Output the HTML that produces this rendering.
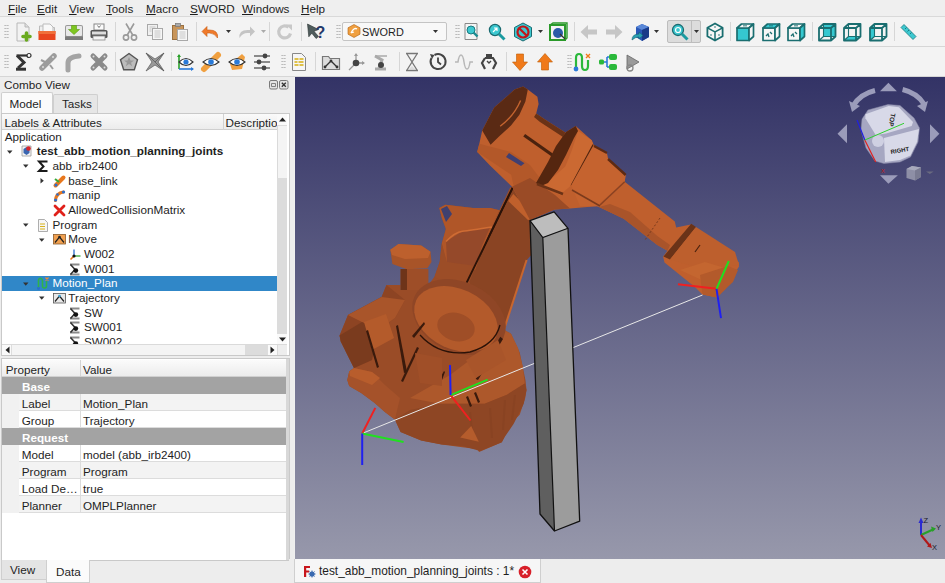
<!DOCTYPE html>
<html><head><meta charset="utf-8">
<style>
*{margin:0;padding:0;box-sizing:border-box}
html,body{width:945px;height:583px;overflow:hidden;background:#efefef;font-family:"Liberation Sans",sans-serif;font-size:12px;color:#1e1e1e}
.a{position:absolute}
svg{overflow:visible}
.t{position:absolute;white-space:nowrap;line-height:1}
#menubar{left:0;top:0;width:945px;height:17px;background:#efefef;border-bottom:1px solid #d9d9d9}
.mi{position:absolute;top:1.6px;font-size:11.7px;line-height:13px}
.mi u{text-decoration:underline;text-underline-offset:0.5px;text-decoration-thickness:1px}
#tb1{left:0;top:17px;width:945px;height:30px;background:#f3f3f3;border-bottom:1px solid #d6d6d6}
#tb2{left:0;top:47px;width:945px;height:30px;background:#f3f3f3;border-bottom:1px solid #d6d6d6}
.sep{position:absolute;width:1px;height:19px;background:#d6d6d6}
.grip{position:absolute;width:5px;height:16px;background-image:radial-gradient(circle,#b4b4b4 0.7px,transparent 1px);background-size:2.5px 3px}
#left{left:0;top:77px;width:294px;height:506px;background:#ededed}
#view{left:295px;top:77px;width:650px;height:482px;background:linear-gradient(#333366,#9798ab);overflow:hidden}
#bottombar{left:289px;top:559px;width:656px;height:24px;background:#ededed}
</style></head><body>
<div id="menubar" class="a">
<span class="mi" style="left:8px"><u>F</u>ile</span>
<span class="mi" style="left:37px"><u>E</u>dit</span>
<span class="mi" style="left:69px"><u>V</u>iew</span>
<span class="mi" style="left:106px"><u>T</u>ools</span>
<span class="mi" style="left:146px"><u>M</u>acro</span>
<span class="mi" style="left:190px"><u>S</u>WORD</span>
<span class="mi" style="left:242px"><u>W</u>indows</span>
<span class="mi" style="left:301px"><u>H</u>elp</span>
</div>
<div id="tb1" class="a"></div>
<div id="tb2" class="a"></div>
<div class="a" style="left:667px;top:20px;width:34px;height:23px;background:#dcdcdc;border:1px solid #bdbdbd;border-radius:2px"></div><div class="a" style="left:691px;top:21px;width:1px;height:21px;background:#bdbdbd"></div><svg class="a" style="left:669.5px;top:21.5px" width="20" height="20" viewBox="0 0 20 20"><circle cx="8" cy="8" r="5.5" fill="#3cc8d0" stroke="#1a6a70" stroke-width="1.3"/><circle cx="8" cy="8" r="2.5" fill="none" stroke="#fff" stroke-width="1.2"/><path d="M12 12l5.5 5.5" stroke="#1a9aa0" stroke-width="3"/></svg><svg class="a" style="left:694px;top:30px" width="5" height="3" viewBox="0 0 5 3"><path d="M0 0h5L2.5 3z" fill="#333"/></svg><div class="a" style="left:342px;top:22px;width:105px;height:19px;background:#f8f8f8;border:1px solid #c4c4c4;border-radius:2px"></div><svg class="a" style="left:347px;top:24px" width="14" height="14" viewBox="0 0 14 14"><path d="M7 0.5l6 3.3v6.4L7 13.5 1 10.2V3.8z" fill="#f0a040" stroke="#b06010" stroke-width="0.6"/><path d="M4 9q3-6 6-4M4 9l3-1" stroke="#fff" stroke-width="1.3" fill="none"/></svg><div class="t" style="left:362px;top:25.8px;font-size:10.9px;line-height:12px">SWORD</div><svg class="a" style="left:433px;top:30px" width="5" height="3" viewBox="0 0 5 3"><path d="M0 0h5L2.5 3z" fill="#333"/></svg><div class="grip" style="left:4px;top:24px"></div>
<svg class="a" style="left:13.5px;top:21.5px" width="20" height="20" viewBox="0 0 20 20"><path d="M3 1h8l4 4v14H3z" fill="#f2f2f2" stroke="#b8b8b8"/><path d="M11 1v4h4" fill="#ddd" stroke="#b8b8b8"/><path d="M12.5 11v7M9 14.5h7" stroke="#6aaa1e" stroke-width="3.6" stroke-linecap="round"/></svg>
<svg class="a" style="left:37.4px;top:21.5px" width="20" height="20" viewBox="0 0 20 20"><path d="M2.5 4h5l1 1.5h9v4h-15z" fill="#eee" stroke="#bbb"/><path d="M6 2h7l3 3v5H6z" fill="#f8f8f8" stroke="#bbb"/><rect x="1.5" y="9" width="17" height="9" fill="#e8461e"/><rect x="1.5" y="9" width="17" height="3" fill="#f0703a"/></svg>
<svg class="a" style="left:63.5px;top:21.5px" width="20" height="20" viewBox="0 0 20 20"><rect x="1" y="3" width="18" height="15" rx="2" fill="#999" /><rect x="2" y="4" width="16" height="10" rx="1" fill="#e8e8e8"/><path d="M7.5 3.5h5v4h3l-5.5 5-5.5-5h3z" fill="#7ec620" stroke="#5a9a10" stroke-width="0.6"/><rect x="1" y="14.5" width="18" height="3.5" fill="#7a7a7a"/></svg>
<svg class="a" style="left:89.1px;top:21.5px" width="20" height="20" viewBox="0 0 20 20"><rect x="5" y="2" width="10" height="6" fill="#fafafa" stroke="#888"/><rect x="1.5" y="8" width="17" height="8" rx="1.5" fill="#555"/><rect x="3" y="9.5" width="14" height="3" fill="#ddd"/><rect x="4" y="14" width="12" height="4" fill="#f5f5f5" stroke="#888" stroke-width="0.8"/><path d="M8.5 3.5l1.5 2 1.5-2" fill="none" stroke="#777"/></svg>
<div class="sep" style="left:114.5px;top:22px"></div>
<svg class="a" style="left:119.8px;top:21.5px" width="20" height="20" viewBox="0 0 20 20"><path d="M6 1.5l7 12M14 1.5l-7 12" stroke="#9a9a9a" stroke-width="1.6"/><circle cx="6" cy="15.5" r="2.6" fill="none" stroke="#9a9a9a" stroke-width="1.6"/><circle cx="14" cy="15.5" r="2.6" fill="none" stroke="#9a9a9a" stroke-width="1.6"/></svg>
<svg class="a" style="left:144.8px;top:21.5px" width="20" height="20" viewBox="0 0 20 20"><rect x="2.5" y="2.5" width="10" height="11" fill="#f0f0f0" stroke="#a8a8a8"/><rect x="7.5" y="6.5" width="10" height="11" fill="#f6f6f6" stroke="#a8a8a8"/><path d="M9.5 9h6M9.5 11h6M9.5 13h6M9.5 15h6" stroke="#bbb" stroke-width="0.8"/><path d="M4.5 5h6M4.5 7h2M4.5 9h2" stroke="#bbb" stroke-width="0.8"/></svg>
<svg class="a" style="left:170.0px;top:21.5px" width="20" height="20" viewBox="0 0 20 20"><rect x="2.5" y="3.5" width="11" height="14" fill="#c8955a" stroke="#9a7040"/><rect x="5.5" y="1.5" width="5" height="3" fill="#aaa" stroke="#777" stroke-width="0.7"/><rect x="7.5" y="7.5" width="10" height="11" fill="#f6f6f6" stroke="#a8a8a8"/><path d="M9.5 10h6M9.5 12h6M9.5 14h6M9.5 16h6" stroke="#bbb" stroke-width="0.8"/></svg>
<div class="sep" style="left:196px;top:22px"></div>
<svg class="a" style="left:201.2px;top:21.5px" width="20" height="20" viewBox="0 0 20 20"><path d="M16.5 16q1-8-8-8H6V4.5L1 9.5 6 14.5v-3.5h2.5q5 0 8 5z" fill="#f07a2a" stroke="#c85a10" stroke-width="0.6"/></svg>
<svg class="a" style="left:226px;top:30px" width="5" height="3" viewBox="0 0 5 3"><path d="M0 0h5L2.5 3z" fill="#333"/></svg>
<svg class="a" style="left:235.5px;top:21.5px" width="20" height="20" viewBox="0 0 20 20"><path d="M3.5 16q-1-8 8-8H14V4.5l5 5-5 5v-3.5h-2.5q-5 0-8 5z" fill="#c4c4c4"/></svg>
<svg class="a" style="left:261px;top:30px" width="5" height="3" viewBox="0 0 5 3"><path d="M0 0h5L2.5 3z" fill="#aaa"/></svg>
<div class="sep" style="left:269px;top:22px"></div>
<svg class="a" style="left:274.9px;top:21.5px" width="20" height="20" viewBox="0 0 20 20"><path d="M15.5 11.5a6 6 0 1 1-2-6.2" fill="none" stroke="#c8c8c8" stroke-width="3.2"/><path d="M11 2.5h6v6z" fill="#c8c8c8"/></svg>
<div class="sep" style="left:301px;top:22px"></div>
<svg class="a" style="left:305.8px;top:21.5px" width="20" height="20" viewBox="0 0 20 20"><path d="M1.5 2l11 5.5-4.5 1.8 4.5 5.2-2.4 2-4.3-5.3-3 3.6z" fill="#4f5c5c" stroke="#2a3333" stroke-width="0.6"/><text x="9.5" y="16" font-size="16" font-weight="bold" fill="#24386a" font-family="Liberation Sans">?</text></svg>
<div class="grip" style="left:336px;top:24px"></div>
<div class="grip" style="left:455px;top:24px"></div>
<svg class="a" style="left:461.5px;top:21.5px" width="20" height="20" viewBox="0 0 20 20"><path d="M3 1.5h12v16H3z" fill="#f4f4f4" stroke="#888"/><circle cx="9" cy="8" r="4" fill="#3cc8d0" stroke="#1a7a80"/><path d="M11.5 10.5l4 4" stroke="#1a8a90" stroke-width="2.4"/></svg>
<svg class="a" style="left:487.0px;top:21.5px" width="20" height="20" viewBox="0 0 20 20"><circle cx="8" cy="8" r="5.6" fill="#3cc8d0" stroke="#1a6a70" stroke-width="1.2"/><path d="M12 12l5.5 5.5" stroke="#1a9aa0" stroke-width="3"/><path d="M6 10l4-4M7 6h3v3" stroke="#fff" stroke-width="1.2" fill="none"/></svg>
<svg class="a" style="left:513.2px;top:21.5px" width="20" height="20" viewBox="0 0 20 20"><path d="M10 1l8.5 4.5v9L10 19 1.5 14.5v-9z" fill="#3cc8d0" stroke="#1a6a70"/><circle cx="10" cy="10" r="5.5" fill="none" stroke="#c0161a" stroke-width="2.2"/><path d="M6.2 6.2l7.6 7.6" stroke="#c0161a" stroke-width="2.2"/></svg>
<svg class="a" style="left:538px;top:30px" width="5" height="3" viewBox="0 0 5 3"><path d="M0 0h5L2.5 3z" fill="#333"/></svg>
<svg class="a" style="left:547.9px;top:21.5px" width="20" height="20" viewBox="0 0 20 20"><rect x="2" y="3" width="15" height="15" fill="none" stroke="#2a9a2a" stroke-width="2"/><path d="M2 3l3-2h14v15l-2 2" fill="none" stroke="#2a9a2a" stroke-width="1.4"/><circle cx="10" cy="11" r="5" fill="#2a5aa8"/><path d="M12 12l5 5" stroke="#333" stroke-width="1.2"/></svg>
<div class="sep" style="left:574px;top:22px"></div>
<svg class="a" style="left:578.5px;top:21.5px" width="20" height="20" viewBox="0 0 20 20"><path d="M1.5 10l7.5-7v4.5h9v5h-9V17z" fill="#c6c6c6"/></svg>
<svg class="a" style="left:603.8px;top:21.5px" width="20" height="20" viewBox="0 0 20 20"><path d="M18.5 10l-7.5-7v4.5H2v5h9V17z" fill="#c6c6c6"/></svg>
<svg class="a" style="left:630.0px;top:21.5px" width="20" height="20" viewBox="0 0 20 20"><path d="M6 5l6-3 7 3v10l-7 4-6-4z" fill="#2a58b8"/><path d="M6 5l6-3 7 3-7 3z" fill="#5a88d8"/><path d="M12 8v11l7-4V5z" fill="#1a3a88"/><path d="M2 18q0-6 7-6v-2l4 3.5-4 3.5v-2q-4 0-7 3z" fill="#2aa0b0" stroke="#106070" stroke-width="0.6"/></svg>
<svg class="a" style="left:654px;top:30px" width="5" height="3" viewBox="0 0 5 3"><path d="M0 0h5L2.5 3z" fill="#333"/></svg>
<svg class="a" style="left:704.8px;top:21.5px" width="20" height="20" viewBox="0 0 20 20"><polygon points="10,1.5 17.6,5.8 17.6,14.2 10,18.5 2.4,14.2 2.4,5.8" fill="#f6f6f6" stroke="#1a6e70" stroke-width="1.8" stroke-linejoin="round"/><path d="M2.4 5.8L10 10L17.6 5.8M10 10V18.5" stroke="#1a6e70" stroke-width="1.5" fill="none"/><circle cx="10" cy="5" r="0.8" fill="#1a6e70"/><circle cx="6" cy="13" r="0.8" fill="#1a6e70"/><circle cx="14" cy="13" r="0.8" fill="#1a6e70"/></svg>
<div class="sep" style="left:730px;top:22px"></div>
<svg class="a" style="left:735.0px;top:21.5px" width="20" height="20" viewBox="0 0 20 20"><polygon points="2,6 14,6 14,18.5 2,18.5" fill="#35c8d0" stroke="#1a6e70" stroke-width="1.7" stroke-linejoin="round"/><polygon points="2,6 6.5,2 18.5,2 14,6" fill="#f6f6f6" stroke="#1a6e70" stroke-width="1.7" stroke-linejoin="round"/><polygon points="14,6 18.5,2 18.5,14.5 14,18.5" fill="#f6f6f6" stroke="#1a6e70" stroke-width="1.7" stroke-linejoin="round"/><rect x="8" y="3" width="4" height="1.5" fill="#1a6e70" opacity="0.6"/></svg>
<svg class="a" style="left:761.0px;top:21.5px" width="20" height="20" viewBox="0 0 20 20"><polygon points="2,6 14,6 14,18.5 2,18.5" fill="#f6f6f6" stroke="#1a6e70" stroke-width="1.7" stroke-linejoin="round"/><polygon points="2,6 6.5,2 18.5,2 14,6" fill="#35c8d0" stroke="#1a6e70" stroke-width="1.7" stroke-linejoin="round"/><polygon points="14,6 18.5,2 18.5,14.5 14,18.5" fill="#f6f6f6" stroke="#1a6e70" stroke-width="1.7" stroke-linejoin="round"/><path d="M5 14l2-2 1 3M9 10l2 2" stroke="#1a6e70" stroke-width="1.3" fill="none"/><rect x="8" y="3" width="4" height="1.5" fill="#1a6e70" opacity="0.6"/></svg>
<svg class="a" style="left:786.2px;top:21.5px" width="20" height="20" viewBox="0 0 20 20"><polygon points="2,6 14,6 14,18.5 2,18.5" fill="#f6f6f6" stroke="#1a6e70" stroke-width="1.7" stroke-linejoin="round"/><polygon points="2,6 6.5,2 18.5,2 14,6" fill="#f6f6f6" stroke="#1a6e70" stroke-width="1.7" stroke-linejoin="round"/><polygon points="14,6 18.5,2 18.5,14.5 14,18.5" fill="#35c8d0" stroke="#1a6e70" stroke-width="1.7" stroke-linejoin="round"/><path d="M5 14l2-2 1 3M9 10l2 2" stroke="#1a6e70" stroke-width="1.3" fill="none"/><rect x="8" y="3" width="4" height="1.5" fill="#1a6e70" opacity="0.6"/></svg>
<div class="sep" style="left:812px;top:22px"></div>
<svg class="a" style="left:816.8px;top:21.5px" width="20" height="20" viewBox="0 0 20 20"><polygon points="6.5,2 18.5,2 18.5,14.5 6.5,14.5" fill="#35c8d0"/><path d="M2 6H14V18.5H2ZM2 6L6.5 2H18.5L14 6M18.5 2V14.5L14 18.5" fill="none" stroke="#1a6e70" stroke-width="1.8" stroke-linejoin="round"/><path d="M6.5 2V14.5H18.5M6.5 14.5L2 18.5" fill="none" stroke="#1a6e70" stroke-width="1.1"/></svg>
<svg class="a" style="left:842.0px;top:21.5px" width="20" height="20" viewBox="0 0 20 20"><polygon points="2,18.5 6.5,14.5 18.5,14.5 14,18.5" fill="#35c8d0"/><path d="M2 6H14V18.5H2ZM2 6L6.5 2H18.5L14 6M18.5 2V14.5L14 18.5" fill="none" stroke="#1a6e70" stroke-width="1.8" stroke-linejoin="round"/><path d="M6.5 2V14.5H18.5M6.5 14.5L2 18.5" fill="none" stroke="#1a6e70" stroke-width="1.1"/></svg>
<svg class="a" style="left:868.0px;top:21.5px" width="20" height="20" viewBox="0 0 20 20"><polygon points="2,6 6.5,2 6.5,14.5 2,18.5" fill="#35c8d0"/><path d="M2 6H14V18.5H2ZM2 6L6.5 2H18.5L14 6M18.5 2V14.5L14 18.5" fill="none" stroke="#1a6e70" stroke-width="1.8" stroke-linejoin="round"/><path d="M6.5 2V14.5H18.5M6.5 14.5L2 18.5" fill="none" stroke="#1a6e70" stroke-width="1.1"/></svg>
<div class="sep" style="left:894px;top:22px"></div>
<svg class="a" style="left:897.5px;top:21.5px" width="20" height="20" viewBox="0 0 20 20"><path d="M3 5.5l3-3 12 12-3 3z" fill="#3cc8d0" stroke="#1a7a80" stroke-width="0.8"/><path d="M7 7l1.5-1.5M9.5 9.5L11 8M12 12l1.5-1.5" stroke="#1a7a80"/></svg>
<div class="grip" style="left:4px;top:54px"></div>
<svg class="a" style="left:12.8px;top:51.5px" width="20" height="20" viewBox="0 0 20 20"><path d="M3.5 3.5H15" stroke="#333" stroke-width="2.2"/><path d="M4 3.5L11 10.5 5 16" fill="none" stroke="#333" stroke-width="3"/><path d="M3 17.2H13" stroke="#333" stroke-width="3"/><circle cx="16" cy="3.5" r="2" fill="#fff" stroke="#333" stroke-width="1.2"/></svg>
<svg class="a" style="left:38.2px;top:51.5px" width="20" height="20" viewBox="0 0 20 20"><path d="M4 16L16 4" stroke="#9c9c9c" stroke-width="5.5" stroke-linecap="round"/><circle cx="5" cy="15" r="1" fill="#ddd"/><circle cx="15" cy="5" r="1" fill="#ddd"/><path d="M3 8l4 2M12 13l3 4" stroke="#9c9c9c" stroke-width="2"/></svg>
<svg class="a" style="left:63.3px;top:51.5px" width="20" height="20" viewBox="0 0 20 20"><path d="M5 18V11Q5 5 16 4" fill="none" stroke="#a4a4a4" stroke-width="5" stroke-linecap="round"/></svg>
<svg class="a" style="left:89.0px;top:51.5px" width="20" height="20" viewBox="0 0 20 20"><path d="M4 4L16 16M16 4L4 16" stroke="#8a8a8a" stroke-width="5" stroke-linecap="round"/><circle cx="4.5" cy="4.5" r="1" fill="#ddd"/><circle cx="15.5" cy="15.5" r="1" fill="#ddd"/><circle cx="15.5" cy="4.5" r="1" fill="#ddd"/><circle cx="4.5" cy="15.5" r="1" fill="#ddd"/></svg>
<div class="sep" style="left:114.5px;top:52px"></div>
<svg class="a" style="left:119.0px;top:51.5px" width="20" height="20" viewBox="0 0 20 20"><path d="M10 1.5l8.5 6.2-3.2 10H4.7l-3.2-10z" fill="#bcbcbc" stroke="#555" stroke-width="1.4"/><path d="M10 5l1.5 3.5h3.5l-3 2.2 1.2 3.5-3.2-2.2-3.2 2.2 1.2-3.5-3-2.2h3.5z" fill="#999"/></svg>
<svg class="a" style="left:144.8px;top:51.5px" width="20" height="20" viewBox="0 0 20 20"><path d="M1 1l9 6 9-6-6 9 6 9-9-6-9 6 6-9z" fill="#9a9a9a" stroke="#666" stroke-width="0.8"/><path d="M1 1l9 9M19 19l-9-9M19 1l-9 9" stroke="#555" stroke-width="0.7"/></svg>
<div class="sep" style="left:171px;top:52px"></div>
<svg class="a" style="left:176.0px;top:51.5px" width="20" height="20" viewBox="0 0 20 20"><path d="M3 17V3" stroke="#2aa02a" stroke-width="1.6"/><path d="M1 5l2-3 2 3" fill="#2aa02a"/><path d="M3 17h14" stroke="#2a7ad8" stroke-width="1.6"/><path d="M15 15l3 2-3 2" fill="#2a7ad8"/><path d="M3 10q7-7 14 0-7 7-14 0z" fill="#fff" stroke="#333" stroke-width="1.1"/><circle cx="10" cy="10" r="2.6" fill="#2a7ad8"/></svg>
<svg class="a" style="left:201.2px;top:51.5px" width="20" height="20" viewBox="0 0 20 20"><path d="M3 17L17 3" stroke="#f0a040" stroke-width="6" stroke-linecap="round"/><path d="M2 10q8-7 16 0-8 7-16 0z" fill="#fff" stroke="#333" stroke-width="1.1"/><circle cx="10" cy="10" r="2.8" fill="#2a7ad8"/></svg>
<svg class="a" style="left:227.1px;top:51.5px" width="20" height="20" viewBox="0 0 20 20"><path d="M5 18l-2-6 12-10 3 3-3 12z" fill="#f0a040"/><path d="M2 10q8-7 16 0-8 7-16 0z" fill="#fff" stroke="#333" stroke-width="1.1"/><circle cx="10" cy="10" r="2.8" fill="#2a7ad8"/></svg>
<svg class="a" style="left:252.0px;top:51.5px" width="20" height="20" viewBox="0 0 20 20"><path d="M2 4h16M2 10h16M2 16h16" stroke="#8a8a8a" stroke-width="2.2"/><circle cx="13" cy="4" r="2.4" fill="#444"/><circle cx="7" cy="10" r="2.4" fill="#444"/><circle cx="12" cy="16" r="2.4" fill="#444"/></svg>
<div class="grip" style="left:281px;top:54px"></div>
<svg class="a" style="left:288.5px;top:51.5px" width="20" height="20" viewBox="0 0 20 20"><path d="M3.5 1.5h9l4 4v13h-13z" fill="#f6f6f6" stroke="#888"/><path d="M5.5 7h4M10.5 7h4M5.5 10h3M9.5 10h5M5.5 13h4M10.5 13h4" stroke="#d8b010" stroke-width="1.6"/></svg>
<div class="sep" style="left:315px;top:52px"></div>
<svg class="a" style="left:321.2px;top:51.5px" width="20" height="20" viewBox="0 0 20 20"><path d="M1.5 4.5h6l1.5 2h9.5v11h-17z" fill="#dcdcdc" stroke="#777" stroke-width="1.2"/><path d="M4 15l6-6 6 6" fill="none" stroke="#333" stroke-width="1.3"/><circle cx="4" cy="15" r="1.4" fill="#333"/><circle cx="10" cy="9" r="1.4" fill="#333"/><circle cx="16" cy="15" r="1.4" fill="#333"/></svg>
<svg class="a" style="left:345.5px;top:51.5px" width="20" height="20" viewBox="0 0 20 20"><path d="M10 11V2M10 11h8M10 11l-7 7" stroke="#999" stroke-width="1.3"/><path d="M8 4l2-3 2 3M16 9l3 2-3 2" fill="#999"/><circle cx="10" cy="11" r="3.3" fill="#444"/></svg>
<svg class="a" style="left:371.1px;top:51.5px" width="20" height="20" viewBox="0 0 20 20"><path d="M4 17h11" stroke="#aaa" stroke-width="3"/><path d="M8 16L11 8 4 4" fill="none" stroke="#aaa" stroke-width="3"/><path d="M4 4h12" stroke="#aaa" stroke-width="1.5"/><circle cx="10" cy="13" r="3" fill="#444"/></svg>
<div class="sep" style="left:398.7px;top:52px"></div>
<svg class="a" style="left:402.2px;top:51.5px" width="20" height="20" viewBox="0 0 20 20"><path d="M4 1.5h12M4 18.5h12" stroke="#777" stroke-width="1.6"/><path d="M5 2l5 8-5 8M15 2l-5 8 5 8" fill="none" stroke="#777" stroke-width="1.3"/><path d="M7 17l3-3 3 3z" fill="#ddd"/></svg>
<svg class="a" style="left:427.8px;top:51.5px" width="20" height="20" viewBox="0 0 20 20"><path d="M3.5 6a7.5 7.5 0 1 0 3-3" fill="none" stroke="#444" stroke-width="2"/><path d="M2 2l4.5 1L4 7z" fill="#444"/><path d="M10 5.5V10l3 2.5" fill="none" stroke="#444" stroke-width="1.8"/></svg>
<svg class="a" style="left:454.0px;top:51.5px" width="20" height="20" viewBox="0 0 20 20"><path d="M1 10h3q1-7 3-7t3 7 3 7 3-7h3" fill="none" stroke="#b8b8b8" stroke-width="1.5"/></svg>
<svg class="a" style="left:478.5px;top:51.5px" width="20" height="20" viewBox="0 0 20 20"><path d="M7 2h6v4H7z" fill="#444"/><path d="M6 6h8l3 5-3 6M6 6l-3 5 3 6" fill="none" stroke="#444" stroke-width="2.2"/><path d="M8 9l2 2 2-2" fill="none" stroke="#444" stroke-width="1.4"/></svg>
<div class="sep" style="left:505.7px;top:52px"></div>
<svg class="a" style="left:509.6px;top:51.5px" width="20" height="20" viewBox="0 0 20 20"><path d="M6.5 2h7v8h4l-7.5 8.5L2.5 10h4z" fill="#f07a1a" stroke="#c05a00" stroke-width="0.6"/></svg>
<svg class="a" style="left:534.5px;top:51.5px" width="20" height="20" viewBox="0 0 20 20"><path d="M6.5 18h7v-8h4L10 1.5 2.5 10h4z" fill="#f07a1a" stroke="#c05a00" stroke-width="0.6"/></svg>
<div class="grip" style="left:567px;top:54px"></div>
<svg class="a" style="left:573.1px;top:51.5px" width="20" height="20" viewBox="0 0 20 20"><path d="M3 16V6q0-4 3-4t3 4v8q0 4 3 4t3-4V8" fill="none" stroke="#2ab83a" stroke-width="2.2"/><path d="M13 2l4 4M17 2l-4 4" stroke="#f07a1a" stroke-width="1.4"/><circle cx="3" cy="17" r="2.4" fill="#2a7ad8"/></svg>
<svg class="a" style="left:598.0px;top:51.5px" width="20" height="20" viewBox="0 0 20 20"><rect x="1" y="7.5" width="5" height="5" rx="1.5" fill="#2ab83a"/><rect x="11" y="2" width="8" height="6" rx="2" fill="#2ab83a"/><rect x="11" y="12" width="8" height="6" rx="2" fill="#2ab83a"/><path d="M6 10h3M9 5v10M9 5h2M9 15h2" stroke="#2a7ad8" stroke-width="1.6" fill="none"/></svg>
<svg class="a" style="left:624.4px;top:51.5px" width="20" height="20" viewBox="0 0 20 20"><path d="M3 3l12 7-12 7z" fill="#9a9a9a" stroke="#666" stroke-width="0.8"/><circle cx="6" cy="16" r="3" fill="none" stroke="#888" stroke-width="1.3"/></svg>
<div id="left" class="a">
 <div class="t" style="left:4px;top:2.3px;font-size:11.7px">Combo View</div>
 <svg class="a" style="left:269px;top:3px" width="20" height="10" viewBox="0 0 20 10">
  <rect x="0.5" y="0.5" width="8" height="8.5" rx="1.5" fill="#e4e4e4" stroke="#7a7a7a"/>
  <path d="M2.5 3.5h4v3h-4z" fill="none" stroke="#777" stroke-width="0.9"/>
  <rect x="10.5" y="0.5" width="8.5" height="8.5" rx="1.5" fill="#e4e4e4" stroke="#7a7a7a"/>
  <path d="M12.8 2.8l4 4M16.8 2.8l-4 4" stroke="#333" stroke-width="1.3"/>
 </svg>
 <!-- tabs -->
 <div class="a" style="left:1px;top:15px;width:52px;height:22px;background:#fbfbfb;border:1px solid #cfcfcf;border-bottom:none;border-radius:2px 2px 0 0"></div>
 <div class="t" style="left:9.5px;top:21px;font-size:11.7px">Model</div>
 <div class="a" style="left:53px;top:17px;width:45px;height:19px;background:#e6e6e6;border:1px solid #cfcfcf;border-bottom:none;border-radius:2px 2px 0 0"></div>
 <div class="t" style="left:62px;top:21.2px;font-size:11.7px">Tasks</div>
 <!-- tree frame -->
 <div class="a" style="left:1px;top:36px;width:289px;height:243px;background:#fff;border:1px solid #c9c9c9"></div>
 <div class="a" style="left:2px;top:37px;width:276px;height:16px;background:linear-gradient(#fafafa,#ececec);border-bottom:1px solid #cfcfcf"></div>
 <div class="a" style="left:223px;top:37px;width:1px;height:16px;background:#d2d2d2"></div>
 <div class="t" style="left:4.5px;top:40.2px;font-size:11.7px">Labels &amp; Attributes</div>
 <div class="a" style="left:224px;top:37px;width:53px;height:16px;overflow:hidden"><div class="t" style="left:1.5px;top:3.2px;font-size:11.7px">Description</div></div>
 <!-- v scrollbar -->
 <div class="a" style="left:277px;top:37px;width:10px;height:230px;background:#f4f4f4;border-left:1px solid #dadada"></div>
 <div class="a" style="left:277px;top:101px;width:10px;height:155px;background:#dcdcdc"></div>
 <div class="a" style="left:277px;top:37px;width:10px;height:12px;background:#fafafa;border-bottom:1px solid #ddd"></div>
 <svg class="a" style="left:279px;top:40px" width="7" height="5"><path d="M0 4.5L3.5 0.5L7 4.5z" fill="#222"/></svg>
 <div class="a" style="left:277px;top:256px;width:10px;height:11px;background:#fafafa;border-top:1px solid #ddd"></div>
 <svg class="a" style="left:279px;top:260px" width="7" height="5"><path d="M0 0.5L3.5 4.5L7 0.5z" fill="#222"/></svg>
 <!-- h scrollbar -->
 <div class="a" style="left:2px;top:267px;width:275px;height:11px;background:#f4f4f4;border-top:1px solid #dadada"></div>
 <div class="a" style="left:245px;top:268px;width:22px;height:10px;background:#dcdcdc"></div>
 <div class="a" style="left:2px;top:268px;width:10px;height:10px;background:#fafafa;border-right:1px solid #ddd"></div>
 <svg class="a" style="left:5px;top:269px" width="5" height="8"><path d="M4.5 0.5L0.5 4L4.5 7.5z" fill="#222"/></svg>
 <div class="a" style="left:267px;top:268px;width:10px;height:10px;background:#fafafa;border-left:1px solid #ddd"></div>
 <svg class="a" style="left:270px;top:269px" width="5" height="8"><path d="M0.5 0.5L4.5 4L0.5 7.5z" fill="#222"/></svg>
 <div class="a" style="left:277px;top:267px;width:10px;height:11px;background:#ededed;border-top:1px solid #dadada;border-left:1px solid #dadada"></div>
<div class="a" style="left:2px;top:54px;width:275px;height:213px;overflow:hidden">
<div class="t" style="left:2.7px;top:-1.50px;line-height:14.67px;font-size:11.7px;color:#1e1e1e;font-weight:normal">Application</div>
<div class="t" style="left:34.8px;top:13.17px;line-height:14.67px;font-size:11.7px;color:#1e1e1e;font-weight:bold">test_abb_motion_planning_joints</div>
<svg class="a" style="left:19.3px;top:14.17px" width="12" height="12" viewBox="0 0 12 12"><path d="M1 1h9v10H1z" fill="#f4f4f4" stroke="#9a9a9a" stroke-width="0.8"/><path d="M2.5 4l3-2 3 2v4l-3 2-3-2z" fill="#3a66b0"/><circle cx="7.5" cy="3.5" r="2.3" fill="#d8262b"/></svg>
<svg class="a" style="left:5.3px;top:18.67px" width="6" height="4"><path d="M0 0.5h5.5L2.75 3.8z" fill="#333"/></svg>
<div class="t" style="left:50.5px;top:27.84px;line-height:14.67px;font-size:11.7px;color:#1e1e1e;font-weight:normal">abb_irb2400</div>
<svg class="a" style="left:35.0px;top:28.84px" width="12" height="12" viewBox="0 0 12 12"><path d="M10.5 1.5H2l4.5 5-4.5 4.5h8.5" fill="none" stroke="#1a1a1a" stroke-width="2"/></svg>
<svg class="a" style="left:21.0px;top:33.34px" width="6" height="4"><path d="M0 0.5h5.5L2.75 3.8z" fill="#333"/></svg>
<div class="t" style="left:66.3px;top:42.51px;line-height:14.67px;font-size:11.7px;color:#1e1e1e;font-weight:normal">base_link</div>
<svg class="a" style="left:50.8px;top:43.51px" width="13" height="13" viewBox="0 0 13 13"><path d="M2.5 10.5L10.5 2.5" stroke="#e8781e" stroke-width="4" stroke-linecap="round"/><path d="M2 4l4 3" stroke="#38a838" stroke-width="2"/><circle cx="3" cy="10" r="1.5" fill="#2b6fd0"/></svg>
<svg class="a" style="left:37.8px;top:47.01px" width="4" height="6"><path d="M0.5 0v5.5L3.8 2.75z" fill="#333"/></svg>
<div class="t" style="left:66.3px;top:57.18px;line-height:14.67px;font-size:11.7px;color:#1e1e1e;font-weight:normal">manip</div>
<svg class="a" style="left:50.8px;top:58.18px" width="13" height="13" viewBox="0 0 13 13"><path d="M2.5 11.5Q3 4 10.5 3" fill="none" stroke="#e8781e" stroke-width="3.2" stroke-linecap="round"/><circle cx="2.6" cy="11" r="1.6" fill="#2b6fd0"/><circle cx="10.5" cy="3" r="1.6" fill="#2b6fd0"/><circle cx="4.5" cy="5.5" r="1.3" fill="#2b6fd0"/></svg>
<div class="t" style="left:66.3px;top:71.85px;line-height:14.67px;font-size:11.7px;color:#1e1e1e;font-weight:normal">AllowedCollisionMatrix</div>
<svg class="a" style="left:50.8px;top:72.85px" width="13" height="13" viewBox="0 0 13 13"><path d="M2 2L11 11M11 2L2 11" stroke="#e0201a" stroke-width="2.8" stroke-linecap="round"/></svg>
<div class="t" style="left:50.5px;top:86.52px;line-height:14.67px;font-size:11.7px;color:#1e1e1e;font-weight:normal">Program</div>
<svg class="a" style="left:35.0px;top:87.52px" width="12" height="13" viewBox="0 0 12 13"><path d="M1.5 0.5h6l3 3v9h-9z" fill="#f6f6f6" stroke="#9a9a9a" stroke-width="0.8"/><path d="M3 5h5M3 7.5h5M3 10h5" stroke="#d8b21a" stroke-width="1.2"/></svg>
<svg class="a" style="left:21.0px;top:92.02px" width="6" height="4"><path d="M0 0.5h5.5L2.75 3.8z" fill="#333"/></svg>
<div class="t" style="left:66.3px;top:101.19px;line-height:14.67px;font-size:11.7px;color:#1e1e1e;font-weight:normal">Move</div>
<svg class="a" style="left:50.8px;top:102.19px" width="13" height="12" viewBox="0 0 13 12"><rect x="0.5" y="1.5" width="12" height="9.5" fill="#f0a050" stroke="#8a5a2a" stroke-width="0.8"/><path d="M2 9.5L6.5 4 11 9.5" fill="none" stroke="#222" stroke-width="1.2"/><circle cx="6.5" cy="4" r="1.3" fill="#222"/></svg>
<svg class="a" style="left:36.8px;top:106.69px" width="6" height="4"><path d="M0 0.5h5.5L2.75 3.8z" fill="#333"/></svg>
<div class="t" style="left:82.0px;top:115.86px;line-height:14.67px;font-size:11.7px;color:#1e1e1e;font-weight:normal">W002</div>
<svg class="a" style="left:66.5px;top:116.86px" width="13" height="13" viewBox="0 0 13 13"><path d="M5 8V1.5" stroke="#2b6fd0" stroke-width="1.3"/><path d="M5 8h6.5" stroke="#38a838" stroke-width="1.3"/><path d="M5 8l-3.5 3.5" stroke="#e8781e" stroke-width="1.6"/><circle cx="5" cy="8" r="1.6" fill="#111"/></svg>
<div class="t" style="left:82.0px;top:130.53px;line-height:14.67px;font-size:11.7px;color:#1e1e1e;font-weight:normal">W001</div>
<svg class="a" style="left:66.5px;top:131.53px" width="12" height="13" viewBox="0 0 12 13"><path d="M1 1.5h9.5M1 11.5h9.5" stroke="#8a8a8a" stroke-width="1.8"/><path d="M1.5 1.5L6 6.5 1.5 11.5" fill="none" stroke="#333" stroke-width="1.6"/><circle cx="6.8" cy="7.6" r="2.4" fill="#111"/></svg>
<div class="a" style="left:0;top:145.20px;width:275px;height:14.67px;background:#3087c8"></div>
<div class="t" style="left:50.5px;top:145.20px;line-height:14.67px;font-size:11.7px;color:#fff;font-weight:normal">Motion_Plan</div>
<svg class="a" style="left:35.0px;top:146.20px" width="12" height="13" viewBox="0 0 12 13"><path d="M1.5 11.5V3.5Q1.5 1 4 1.5 5.5 2 5.5 4v5q0 2 2 2t2-2V4" fill="none" stroke="#2fb24a" stroke-width="1.6"/><path d="M8.5 0.5l3 3M11.5 0.5l-3 3" stroke="#f08a30" stroke-width="1.2"/><circle cx="1.5" cy="11.5" r="1.4" fill="#2b6fd0"/></svg>
<svg class="a" style="left:21.0px;top:150.70px" width="6" height="4"><path d="M0 0.5h5.5L2.75 3.8z" fill="#333"/></svg>
<div class="t" style="left:66.3px;top:159.87px;line-height:14.67px;font-size:11.7px;color:#1e1e1e;font-weight:normal">Trajectory</div>
<svg class="a" style="left:50.8px;top:160.87px" width="13" height="12" viewBox="0 0 13 12"><rect x="0.5" y="1.5" width="12" height="9.5" fill="#e8e8e8" stroke="#555" stroke-width="0.8"/><path d="M2 9.5L6.5 4 11 9.5" fill="none" stroke="#222" stroke-width="1.2"/><circle cx="6.5" cy="4" r="1.3" fill="#3aa0d0"/></svg>
<svg class="a" style="left:36.8px;top:165.37px" width="6" height="4"><path d="M0 0.5h5.5L2.75 3.8z" fill="#333"/></svg>
<div class="t" style="left:82.0px;top:174.54px;line-height:14.67px;font-size:11.7px;color:#1e1e1e;font-weight:normal">SW</div>
<svg class="a" style="left:66.5px;top:175.54px" width="12" height="13" viewBox="0 0 12 13"><path d="M1 1.5h9.5M1 11.5h9.5" stroke="#8a8a8a" stroke-width="1.8"/><path d="M1.5 1.5L6 6.5 1.5 11.5" fill="none" stroke="#333" stroke-width="1.6"/><circle cx="6.8" cy="7.6" r="2.4" fill="#111"/></svg>
<div class="t" style="left:82.0px;top:189.21px;line-height:14.67px;font-size:11.7px;color:#1e1e1e;font-weight:normal">SW001</div>
<svg class="a" style="left:66.5px;top:190.21px" width="12" height="13" viewBox="0 0 12 13"><path d="M1 1.5h9.5M1 11.5h9.5" stroke="#8a8a8a" stroke-width="1.8"/><path d="M1.5 1.5L6 6.5 1.5 11.5" fill="none" stroke="#333" stroke-width="1.6"/><circle cx="6.8" cy="7.6" r="2.4" fill="#111"/></svg>
<div class="t" style="left:82.0px;top:203.88px;line-height:14.67px;font-size:11.7px;color:#1e1e1e;font-weight:normal">SW002</div>
<svg class="a" style="left:66.5px;top:204.88px" width="12" height="13" viewBox="0 0 12 13"><path d="M1 1.5h9.5M1 11.5h9.5" stroke="#8a8a8a" stroke-width="1.8"/><path d="M1.5 1.5L6 6.5 1.5 11.5" fill="none" stroke="#333" stroke-width="1.6"/><circle cx="6.8" cy="7.6" r="2.4" fill="#111"/></svg>
</div>
<div class="a" style="left:1px;top:281px;width:289px;height:203px;background:#fff;border:1px solid #c9c9c9"></div>
<div class="a" style="left:286px;top:282px;width:3px;height:201px;background:#d8d8d8"></div>
<div class="a" style="left:2px;top:283px;width:284px;height:17px;background:linear-gradient(#fbfbfb,#ececec);border-bottom:1px solid #d0d0d0"></div>
<div class="a" style="left:80px;top:283px;width:1px;height:16px;background:#d4d4d4"></div>
<div class="t" style="left:5.7px;top:284.6px;line-height:16px;font-size:11.7px">Property</div>
<div class="t" style="left:83px;top:284.6px;line-height:16px;font-size:11.7px">Value</div>
<div class="a" style="left:2px;top:300px;width:284px;height:17px;background:#a3a3a3"></div>
<div class="t" style="left:22px;top:301.3px;line-height:17px;font-size:11.7px;font-weight:bold;color:#fff">Base</div>
<div class="a" style="left:2px;top:317px;width:284px;height:17px;background:#f3f3f3"></div>
<div class="a" style="left:2px;top:317px;width:17px;height:17px;background:#f1f1f1"></div>
<div class="a" style="left:19px;top:333px;width:267px;height:1px;background:#dcdcdc"></div>
<div class="a" style="left:80px;top:317px;width:1px;height:17px;background:#dcdcdc"></div>
<div class="t" style="left:21.7px;top:318.3px;line-height:17px;font-size:11.7px">Label</div>
<div class="t" style="left:83px;top:318.3px;line-height:17px;font-size:11.7px">Motion_Plan</div>
<div class="a" style="left:2px;top:334px;width:284px;height:17px;background:#ffffff"></div>
<div class="a" style="left:2px;top:334px;width:17px;height:17px;background:#f1f1f1"></div>
<div class="a" style="left:19px;top:350px;width:267px;height:1px;background:#dcdcdc"></div>
<div class="a" style="left:80px;top:334px;width:1px;height:17px;background:#dcdcdc"></div>
<div class="t" style="left:21.7px;top:335.3px;line-height:17px;font-size:11.7px">Group</div>
<div class="t" style="left:83px;top:335.3px;line-height:17px;font-size:11.7px">Trajectory</div>
<div class="a" style="left:2px;top:351px;width:284px;height:17px;background:#a3a3a3"></div>
<div class="t" style="left:22px;top:352.3px;line-height:17px;font-size:11.7px;font-weight:bold;color:#fff">Request</div>
<div class="a" style="left:2px;top:368px;width:284px;height:17px;background:#ffffff"></div>
<div class="a" style="left:2px;top:368px;width:17px;height:17px;background:#f1f1f1"></div>
<div class="a" style="left:19px;top:384px;width:267px;height:1px;background:#dcdcdc"></div>
<div class="a" style="left:80px;top:368px;width:1px;height:17px;background:#dcdcdc"></div>
<div class="t" style="left:21.7px;top:369.3px;line-height:17px;font-size:11.7px">Model</div>
<div class="t" style="left:83px;top:369.3px;line-height:17px;font-size:11.7px">model (abb_irb2400)</div>
<div class="a" style="left:2px;top:385px;width:284px;height:17px;background:#f3f3f3"></div>
<div class="a" style="left:2px;top:385px;width:17px;height:17px;background:#f1f1f1"></div>
<div class="a" style="left:19px;top:401px;width:267px;height:1px;background:#dcdcdc"></div>
<div class="a" style="left:80px;top:385px;width:1px;height:17px;background:#dcdcdc"></div>
<div class="t" style="left:21.7px;top:386.3px;line-height:17px;font-size:11.7px">Program</div>
<div class="t" style="left:83px;top:386.3px;line-height:17px;font-size:11.7px">Program</div>
<div class="a" style="left:2px;top:402px;width:284px;height:17px;background:#ffffff"></div>
<div class="a" style="left:2px;top:402px;width:17px;height:17px;background:#f1f1f1"></div>
<div class="a" style="left:19px;top:418px;width:267px;height:1px;background:#dcdcdc"></div>
<div class="a" style="left:80px;top:402px;width:1px;height:17px;background:#dcdcdc"></div>
<div class="t" style="left:21.7px;top:403.3px;line-height:17px;font-size:11.7px">Load De…</div>
<div class="t" style="left:83px;top:403.3px;line-height:17px;font-size:11.7px">true</div>
<div class="a" style="left:2px;top:419px;width:284px;height:17px;background:#f3f3f3"></div>
<div class="a" style="left:2px;top:419px;width:17px;height:17px;background:#f1f1f1"></div>
<div class="a" style="left:19px;top:435px;width:267px;height:1px;background:#dcdcdc"></div>
<div class="a" style="left:80px;top:419px;width:1px;height:17px;background:#dcdcdc"></div>
<div class="t" style="left:21.7px;top:420.3px;line-height:17px;font-size:11.7px">Planner</div>
<div class="t" style="left:83px;top:420.3px;line-height:17px;font-size:11.7px">OMPLPlanner</div>
<div class="a" style="left:1px;top:483.00px;width:46px;height:20px;background:#e4e4e4;border:1px solid #cfcfcf;border-top:none"></div>
<div class="t" style="left:10px;top:484.00px;line-height:17px;font-size:11.7px">View</div>
<div class="a" style="left:46px;top:483.00px;width:44px;height:23px;background:#fbfbfb;border:1px solid #cfcfcf;border-top:none"></div>
<div class="t" style="left:56px;top:486.00px;line-height:17px;font-size:11.7px">Data</div>
</div>


<div id="view" class="a">
<svg class="a" style="left:0;top:0" width="650" height="482" viewBox="295 77 650 482">
<polygon points="386.5,285 381.6,297 348,315 339.6,335.4 340.8,341.4 354,367.9 349.2,371.5 347.3,379.9 349.2,385.9 361.2,393.1 374.4,402.7 385.2,412.3 394.9,419.5 400.6,432.1 421.2,440.4 441.7,444.5 462.3,447.2 477,449.1 479.1,451.9 501.8,442.3 504.5,436.8 508.7,425.8 519.7,414.8 525.2,398.3 526.5,390 525.5,380.3 519.7,352.6 511,333.8 504.3,330 526.6,260 531,255 531,218 513.3,186.3 510,187.8 499.4,210.2 490.2,207.9 473.2,207.9 445.4,204.8 439.3,207.9 441.8,217.8 445.9,229 441.8,243.5 439.7,262 434.6,276.5 428.4,285 428.4,290 400.6,290 400.6,285" fill="#9a4c27" />
<polygon points="513.3,186.3 531,218 531,255 526.6,260 504.3,328.6 490,320 468.5,280.6" fill="#8a4423" />
<polygon points="508.2,201 513.3,194 531,212 531,219 528,220" fill="#c0602c" />
<path d="M526.6 260L504.3 328.6" stroke="#c8662e" stroke-width="2"/>
<path d="M513.3 186.3L466 284" stroke="#2a1208" stroke-width="1.8"/>
<polygon points="439.3,207.9 445.4,204.8 473.2,207.9 490.2,207.9 499.4,210.2 489,233 475,270 446,262 441.8,243.5 445.9,229 441.8,217.8" fill="#b05628" />
<polygon points="446,241.5 462.4,231.2 490,227.5 482,246 476,266 460,268 447,262" fill="#95492a" />
<path d="M446 241.5Q455 232 462.4 231.2T492 227" stroke="#cf6c34" stroke-width="1.6" fill="none"/>
<polygon points="441,209 447,206 452,214 446,222" fill="#3f4070" />
<polygon points="441.8,243.5 447,262 476,266 468,285 455,290 434.6,276.5 439.7,262" fill="#9c4d27" />
<path d="M513.3 186.3L466 284" stroke="#2a1208" stroke-width="1.8"/>
<polygon points="390.3,249.7 398.5,244 421.2,245.6 430.5,251.8 431.5,262 427.4,268.3 406.8,269.3 392.4,264.1" fill="#a85428" />
<polygon points="390.3,249.7 398.5,244 421.2,245.6 430.5,251.8 428,258 405,259 392,255" fill="#bd602d" />
<polygon points="400.6,269 428.4,269 428.4,290 400.6,290" fill="#9e4e28" />
<polygon points="400.6,269 407,269 407,290 400.6,290" fill="#6e3419" />
<polygon points="386.5,285 381.6,297 348,315 339.6,335.4 340.8,341.4 354,367.9 372,360 378,330 395,318 405,300" fill="#8d4423" />
<polygon points="348,315 381.6,297 405,300 395,318 378,330 362,322" fill="#a9552a" />
<polygon points="362,322 378,330 372,360 354,367.9 340.8,341.4 339.6,335.4" fill="#7a3b1e" />
<polygon points="364,322 386,314 394,338 372,350" fill="#b45b2b" />
<polygon points="504.3,330 511,333.8 518,347.9 522.6,365.7 524.8,383.6 507,394.7 484.6,403.7 440,403.7 410,398 450,375 490,345" fill="#ad582b" />
<polygon points="440,403.7 484.6,403.7 507,394.7 524.8,383.6 526.5,390 523.7,403.7 513.7,423.8 504.7,437 501.8,442.3 480.2,451 462.3,446 441.7,444.5 421.2,440.4 400.6,432.1 394.9,419.5 410,410" fill="#8e4624" />
<path d="M470 412L473 440M490 408L492 438M505 400L503 430M515 395L512 420" stroke="#7e3d1f" stroke-width="2" opacity="0.3"/>
<polygon points="460.2,437.6 471.2,426 478.8,441.7" fill="#b55c2c" />
<polygon points="354,367.9 349.2,371.5 347.3,379.9 349.2,385.9 361.2,393.1 374.4,402.7 385.2,412.3 394.9,419.5 400,398 385,385 372,372" fill="#a5522a" />
<polygon points="354,367.9 349.2,371.5 350,376 372,385 380,378 372,372" fill="#b85d2c" />
<ellipse cx="459" cy="317" rx="49" ry="35" fill="#8f4626" transform="rotate(25 459 317)"/>
<ellipse cx="456" cy="319" rx="44" ry="30" fill="#b35a2b" transform="rotate(25 456 319)"/>
<path d="M420 335Q440 357 470 352Q495 345 500 325" stroke="#2a1208" stroke-width="1.3" fill="none"/>
<ellipse cx="456" cy="327" rx="19" ry="14" fill="#9f4e27" transform="rotate(15 456 327)"/>
<polygon points="500.3,336.7 503,339 478,380 475.7,379" fill="#3a1a0c" />
<polygon points="396,326 398,325 407,372 404,373" fill="#3a1a0c" />
<polygon points="401,381 417,347 419,348 403,382" fill="#3a1a0c" />
<polygon points="412,336 424,322 425,324 414,338" fill="#3a1a0c" />
<polygon points="466,397 468,396 472,406 470,407" fill="#3a1a0c" />
<polygon points="474,393 476,392 480,402 478,403" fill="#3a1a0c" />
<polygon points="366,331 368,330 379,367 377,368" fill="#3a1a0c" />
<polygon points="440,378 444,371 445,372 442,380" fill="#3a1a0c" />
<polygon points="415,353 442,358 442,386 420,383" fill="#a04f28" />
<polygon points="466,360 498,340 506,360 476,378" fill="#a9552a" />
<polygon points="482.2,130.4 494.2,107.6 514.6,89.6 523,86.6 527.8,89.6 537.4,96.8 538.6,104 536.2,113.6 545,119.6 565.3,132.6 575.7,126 591.7,140.2 593.6,144.9 606.8,152.5 607.7,158.1 625.7,174.2 624.7,181.7 674.8,221.6 676.2,227.5 690.8,224.5 702.4,236.2 731.6,253.7 738.9,262.4 738.9,266.8 731.6,277 725.8,288.7 717,297.4 702.4,294.5 695.2,287.2 664.5,262.4 663.1,256.6 667.5,250.8 657.3,245 623.7,218.7 599,207 596.4,206.2 570,208.5 554.5,209.4 530,220 513.3,188.8 512,186.7 490,165.5 477.2,152 479.3,143.8" fill="#bf5f2d" />
<polygon points="479.3,143.8 511,152 530,165 545,185 537,201 514.2,189 511.2,174.7 477.2,152" fill="#b35829" />
<polygon points="509,153 524.5,163.3 521,166 506,157" fill="#3f3f72" />
<polygon points="512,186.7 530,178 555,195 570,208.5 554.5,209.4 530,220 513.3,188.8" fill="#9a4b26" />
<polygon points="482.2,130.4 494.2,107.6 514.6,89.6 523,86.6 527.8,89.6 525.4,101.6 519.4,114.8 511,125.6 499,136.4 490.6,144.8" fill="#5a2a14" />
<path d="M520.6 100.4Q514 116 500.2 126.2" stroke="#c4642f" stroke-width="1.4" fill="none"/>
<polygon points="536.2,113.6 545,119.6 565.3,132.6 563,137 540,122 534,117" fill="#6a3216" />
<path d="M524.2 135.2L554 156.2" stroke="#4a220e" stroke-width="3.2"/>
<polygon points="578,131 591.7,140.2 593.6,144.9 571,185.5 560,195 541,185 550,180 565.3,166.6 572,150" fill="#cb6932" />
<polygon points="575.7,126 578,131 574,138 566,155 558,170 548,183 541,186 536,183 540,176 548,162 556,146 566,132" fill="#55260f" />
<path d="M594 145L572 186" stroke="#4e230e" stroke-width="3.2"/>
<path d="M537 184L563 194" stroke="#6a3216" stroke-width="2.5"/>
<polygon points="593.6,144.9 606.8,152.5 607.7,158.1 625.7,174.2 624.7,181.7 596.4,206.2 580,206 571,185.5" fill="#c5632f" />
<path d="M594 146L607 153M608 159L625.7 175" stroke="#5e2a12" stroke-width="2.4"/>
<path d="M572 190L600 206" stroke="#7a3a1c" stroke-width="1.5"/>
<path d="M624.7 181.7L600 205" stroke="#8a4222" stroke-width="1.5"/>
<polygon points="630,212 657.3,236 670,245 667.5,250.8 657.3,245 623.7,218.7 599,207 610,204" fill="#a9542a" />
<path d="M660 218L645 240" stroke="#7a3a1c" stroke-width="1" stroke-dasharray="2 2"/>
<polygon points="663.5,256.5 691.2,223.7 696,227 670,259.5" fill="#6a3318" />
<polygon points="670,259.5 696,227 735,252 739,265 705,270" fill="#bd5f2d" />
<polygon points="680,270 705,262 725,268 706,282" fill="#c46630" />
<polygon points="700,275 728,266 738,270 733,282 725.8,288.7 717,297.4 702.4,294.5" fill="#b35a2b" />
<path d="M695 252L700 245" stroke="#4a220e" stroke-width="1.2"/>
<path d="M362 433.5L702.5 295" stroke="#e8e8e8" stroke-width="1"/>
<polygon points="530,220.6 542.8,237.6 554.5,531 540,514" fill="#5f5f5f" />
<polygon points="542.8,237.6 568,228.3 579.7,521.2 554.5,531" fill="#9c9c9c" />
<polygon points="530,220.6 554.1,211.8 568,228.3 542.8,237.6" fill="#bdbdbd" />
<polygon points="530,220.6 554.1,211.8 568,228.3 579.7,521.2 554.5,531 540,514" fill="none" stroke="#111" stroke-width="1.3" stroke-linejoin="round"/>
<path d="M530 220.6L542.8 237.6L568 228.3M542.8 237.6L554.5 531" fill="none" stroke="#111" stroke-width="1.2"/>
<path d="M362.2 433.5L375.3 407.9" stroke="#f02020" stroke-width="2"/>
<path d="M362.2 433.5L403.6 441.9" stroke="#20e020" stroke-width="2"/>
<path d="M362.2 433.5L362.2 465" stroke="#2020f0" stroke-width="2"/>
<path d="M450.6 395.1L470.5 420.5" stroke="#f02020" stroke-width="2"/>
<path d="M450.6 395.1L487.7 379.6" stroke="#20e020" stroke-width="2"/>
<path d="M450.6 395.1L450 365" stroke="#2020f0" stroke-width="2"/>
<path d="M716.5 288.8L678 284.2" stroke="#f02020" stroke-width="2"/>
<path d="M716.5 288.8L728.8 261" stroke="#20e020" stroke-width="2"/>
<path d="M716.5 288.8L721 318.2" stroke="#2020f0" stroke-width="2"/>
<g fill="#9b9cba">
<polygon points="880,91.3 888.4,82.8 896.9,91.3"/>
<polygon points="880,175.2 888.4,183.7 897.9,175.2"/>
<polygon points="837.5,133.7 847,124.3 847,143.2"/>
<polygon points="939.4,133.7 930,124.3 930,143.2"/>
</g>
<path d="M875 90.5Q860 94 853 106" fill="none" stroke="#9b9cba" stroke-width="5"/>
<polygon points="849,101 852,112 860,106" fill="#9b9cba"/>
<path d="M902.6 89.5Q917 93 924 104" fill="none" stroke="#9b9cba" stroke-width="5"/>
<polygon points="928,101 925,112 917,106" fill="#9b9cba"/>
<path d="M862 119L868 110L888 104.5L900 105.5L914 118L919.5 128L918 142L910.5 157L900 162L884 163.5L875 161L866 148L861 130Z" fill="#a6a7c2" stroke="#8a8ba8" stroke-width="0.5" stroke-linejoin="round"/>
<path d="M865.4 114.3L888.6 105.9L898.9 107.2L913 122L911.7 125.9L886 133.6L875.7 134.9L865.4 118.2Z" fill="#d8d9e8"/>
<path d="M884 138L919 129L917 142L910.5 155.5L900 160L885 162Z" fill="#d8d9e8"/>
<circle cx="878" cy="141" r="6" fill="#cfd0e2"/>
<text x="0" y="0" font-family="Liberation Sans" font-size="6.5" font-weight="bold" fill="#222" transform="translate(891 113) rotate(100)">TOP</text>
<text x="0" y="0" font-family="Liberation Sans" font-size="6" font-weight="bold" fill="#222" transform="translate(891 154) rotate(-10)">RIGHT</text>
<path d="M857 120L864.8 140" stroke="#2020e0" stroke-width="1.2"/>
<path d="M864.8 140L875.7 162" stroke="#e02020" stroke-width="1.2"/>
<path d="M864.8 140L904 123.3" stroke="#30d030" stroke-width="1"/>
<text x="881" y="173" font-family="Liberation Sans" font-size="6" fill="#c02020">X</text>
<path d="M906.5 169L912 166L921 167.5V177L915 180.5L906.5 178Z" fill="#8e8fa6"/>
<path d="M906.5 169L912 166L921 167.5L915 170.5Z" fill="#a8a9bc"/>
<path d="M915 170.5V180.5L921 177V167.5Z" fill="#7a7b92"/>
<polygon points="926,171.4 933.7,171.4 929.8,174" fill="#6a6b80"/>
<path d="M921 535L921 521" stroke="#2a2ad0" stroke-width="2"/><polygon points="918.5,523 921,517.5 923.5,523" fill="#2a2ad0"/>
<path d="M921 535L934 529" stroke="#28a028" stroke-width="2"/><polygon points="931,526.5 936,528.5 932.5,532" fill="#28a028"/>
<path d="M921 535L930 546" stroke="#b01818" stroke-width="2"/><polygon points="927,546.5 932,548 930.5,543" fill="#b01818"/>
<text x="923.5" y="523" font-family="Liberation Sans" font-size="7.5" fill="#1a1a2a">Z</text>
<text x="936" y="530" font-family="Liberation Sans" font-size="7.5" fill="#1a1a2a">Y</text>
<text x="932" y="550" font-family="Liberation Sans" font-size="7.5" fill="#1a1a2a">X</text>

</svg>
</div>
<div id="bottombar" class="a"></div>
<div class="a" style="left:294px;top:559px;width:247px;height:24px;background:#f6f6f6;border:1px solid #cfcfcf;border-top:none"></div>
<svg class="a" style="left:303px;top:565px" width="13" height="13" viewBox="0 0 13 13"><path d="M1 1h6v2H3.2v2.5h3v2h-3V12H1z" fill="#c8161c"/><circle cx="9" cy="9" r="2.6" fill="#3a6ab0"/><circle cx="9" cy="9" r="1" fill="#f6f6f6"/><path d="M9 5.5v7M5.5 9h7M6.5 6.5l5 5M11.5 6.5l-5 5" stroke="#3a6ab0" stroke-width="1"/></svg>
<div class="t" style="left:319px;top:564.8px;font-size:11.9px;line-height:13px">test_abb_motion_planning_joints : 1*</div>
<svg class="a" style="left:518px;top:565px" width="14" height="14" viewBox="0 0 14 14"><circle cx="7" cy="7" r="6.3" fill="#d8202a"/><path d="M4.5 4.5l5 5M9.5 4.5l-5 5" stroke="#fff" stroke-width="1.6"/></svg>

</body></html>
